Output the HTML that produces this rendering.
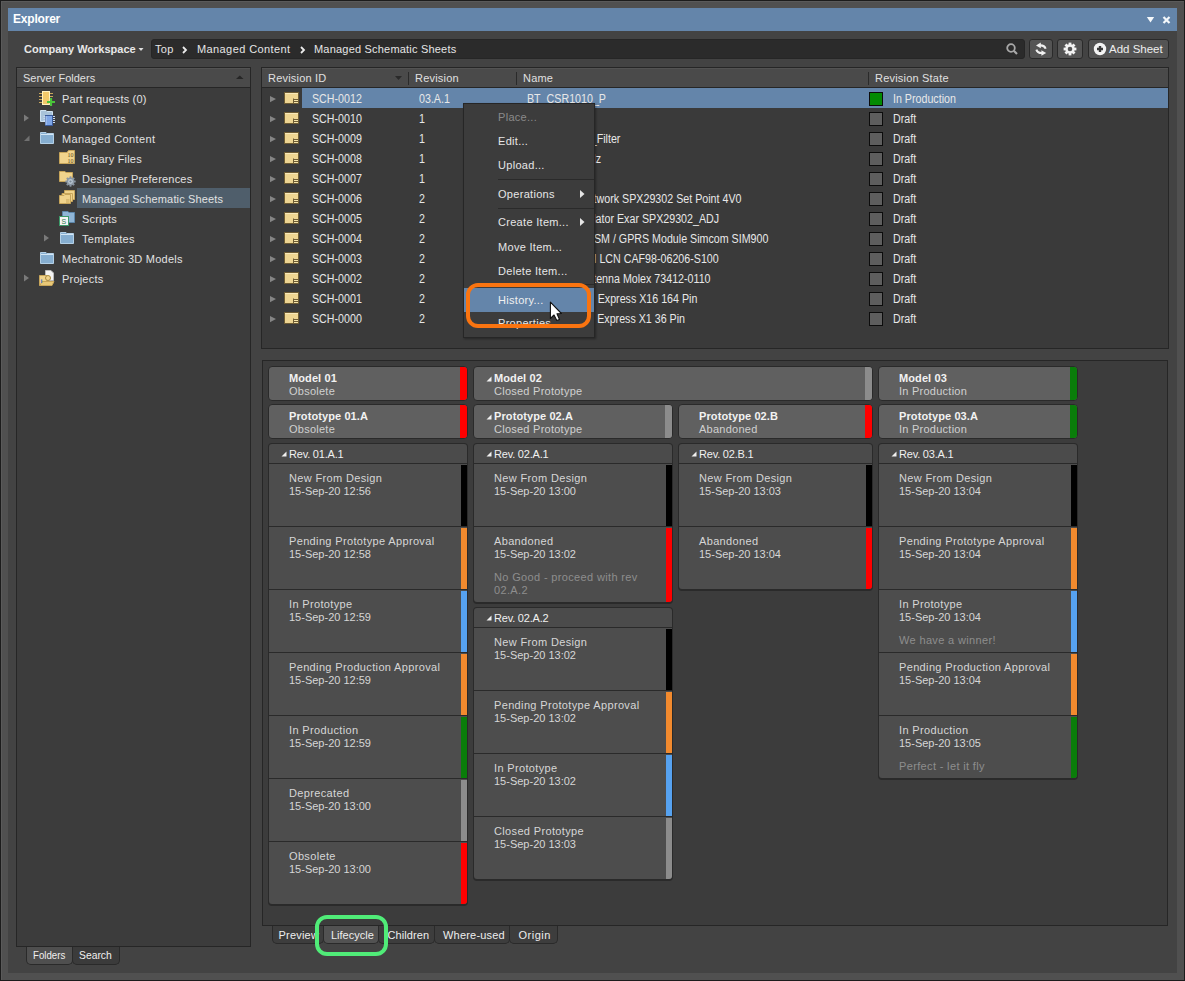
<!DOCTYPE html><html><head><meta charset="utf-8"><style>
*{box-sizing:border-box}
body{margin:0;width:1185px;height:981px;overflow:hidden;background:#1c1c1c;position:relative;font-family:"Liberation Sans", sans-serif;font-size:11px;color:#e6e6e6}
.a{position:absolute}
.t{position:absolute;white-space:nowrap;line-height:13px}
.n{position:absolute;white-space:nowrap;line-height:13px;font-size:12px;transform:scaleX(.89);transform-origin:0 0;color:#e8e8e8}
.nr{position:absolute;white-space:nowrap;line-height:13px;font-size:12px;transform:scaleX(.89);transform-origin:100% 0;color:#e8e8e8;text-align:right}
</style></head><body>
<div class="a" style="left:1px;top:1px;width:1183px;height:979px;background:#505050;border-top:1px solid #5a5a5a;border-left:1px solid #5a5a5a"></div><div class="a" style="left:8px;top:8px;width:1169px;height:965px;background:#434343"></div><div class="a" style="left:8px;top:8px;width:1169px;height:23px;background:#6485aa"></div><div class="t" style="left:13px;top:12px;font-weight:bold;font-size:12px;color:#fff;line-height:14px;letter-spacing:-.2px">Explorer</div><svg class="a" style="left:1140px;top:12px" width="40" height="14" viewBox="0 0 40 14"><path d="M6.8 5 L14.2 5 L10.5 10.5 Z" fill="#f4f8fb"/><path d="M23.5 5 L29.5 11 M29.5 5 L23.5 11" stroke="#f4f8fb" stroke-width="2.2"/></svg><div class="t" style="left:24px;top:43px;font-weight:bold;color:#e8e8e8">Company Workspace</div><svg class="a" style="left:137px;top:46px" width="10" height="7" viewBox="0 0 10 7"><path d="M1.5 2 L6.5 2 L4 5 Z" fill="#e0e0e0"/></svg><div class="a" style="left:151px;top:39px;width:874px;height:20px;background:#2b2b2b;border-radius:3px;border:1px solid #262626"></div><div class="t" style="left:155px;top:43px;color:#e6e6e6;letter-spacing:.3px">Top</div><svg class="a" style="left:181px;top:46px" width="8" height="8" viewBox="0 0 8 8"><path d="M2 1 L5 4 L2 7" stroke="#ececec" stroke-width="1.8" fill="none"/></svg><div class="t" style="left:197px;top:43px;color:#e6e6e6;letter-spacing:.4px">Managed Content</div><svg class="a" style="left:299px;top:46px" width="8" height="8" viewBox="0 0 8 8"><path d="M2 1 L5 4 L2 7" stroke="#ececec" stroke-width="1.8" fill="none"/></svg><div class="t" style="left:314px;top:43px;color:#e6e6e6;letter-spacing:.2px">Managed Schematic Sheets</div><svg class="a" style="left:1005px;top:42px" width="14" height="14" viewBox="0 0 14 14"><circle cx="6" cy="6" r="3.8" stroke="#a8a8a8" stroke-width="1.8" fill="none"/><path d="M8.8 8.8 L12 12" stroke="#a8a8a8" stroke-width="2.2"/></svg><div class="a" style="left:1029px;top:39px;width:24px;height:20px;background:#545454;border:1px solid #2a2a2a;border-radius:3px"></div><div class="a" style="left:1057px;top:39px;width:26px;height:20px;background:#545454;border:1px solid #2a2a2a;border-radius:3px"></div><div class="a" style="left:1088px;top:39px;width:81px;height:20px;background:#545454;border:1px solid #2a2a2a;border-radius:3px"></div><svg class="a" style="left:1034px;top:42px" width="16" height="15" viewBox="0 0 16 15"><path d="M11.6 6.8 Q10.5 3.2 6 3.4" stroke="#f0f0f0" stroke-width="2.1" fill="none"/><path d="M2 3.4 L6.8 0.6 L6.8 6.2 Z" fill="#f0f0f0"/><path d="M2.4 7.6 Q3.5 11.2 8 11" stroke="#f0f0f0" stroke-width="2.1" fill="none"/><path d="M12.2 11 L7.4 8.2 L7.4 13.8 Z" fill="#f0f0f0"/></svg><svg class="a" style="left:1062px;top:42px" width="16" height="15" viewBox="0 0 16 15"><g fill="#f2f2f2" transform="translate(8 7)"><rect x="-1.4" y="-6.4" width="2.8" height="3" transform="rotate(0)"/><rect x="-1.4" y="-6.4" width="2.8" height="3" transform="rotate(45)"/><rect x="-1.4" y="-6.4" width="2.8" height="3" transform="rotate(90)"/><rect x="-1.4" y="-6.4" width="2.8" height="3" transform="rotate(135)"/><rect x="-1.4" y="-6.4" width="2.8" height="3" transform="rotate(180)"/><rect x="-1.4" y="-6.4" width="2.8" height="3" transform="rotate(225)"/><rect x="-1.4" y="-6.4" width="2.8" height="3" transform="rotate(270)"/><rect x="-1.4" y="-6.4" width="2.8" height="3" transform="rotate(315)"/><circle r="4.7"/></g><circle cx="8" cy="7" r="2.3" fill="#545454"/></svg><svg class="a" style="left:1093px;top:42px" width="14" height="14" viewBox="0 0 14 14"><circle cx="7" cy="7" r="6.2" fill="#f4f4f4"/><path d="M7 4 V10 M4 7 H10" stroke="#3a3a3a" stroke-width="2.4"/></svg><div class="t" style="left:1109px;top:43px;color:#eee;font-size:11.5px">Add Sheet</div><div class="a" style="left:16px;top:67px;width:235px;height:880px;background:#3c3c3c;border:1px solid #262626"></div><div class="a" style="left:17px;top:68px;width:233px;height:20px;background:#4a4a4a;border-bottom:1px solid #262626;border-top:1px solid #535353"></div><div class="t" style="left:23px;top:72px;color:#e0e0e0">Server Folders</div><svg class="a" style="left:235px;top:73px" width="10" height="7" viewBox="0 0 10 7"><path d="M1 6 L8.5 6 L4.75 2.5 Z" fill="#262626"/></svg><svg class="a" style="left:39px;top:90px" width="17" height="17" viewBox="0 0 17 17"><path d="M0 3.5 H3 M0 6.5 H3 M0 9.5 H3 M0 12.5 H3 M11 3.5 H14 M11 6.5 H14" stroke="#c9a85c"/><rect x="3.5" y="1.5" width="7" height="13" fill="#f2c96a" stroke="#fff2c0"/><path d="M12 8 V16 M8 12 H16" stroke="#49c43a" stroke-width="2.2"/></svg><div class="t" style="left:62px;top:93px;color:#e2e2e2;letter-spacing:0.15px">Part requests (0)</div><svg class="a" style="left:23px;top:113px" width="8" height="10" viewBox="0 0 8 10"><path d="M1 1.5 L6 5 L1 8.5 Z" fill="#7a7a7a"/></svg><svg class="a" style="left:39px;top:110px" width="17" height="17" viewBox="0 0 17 17"><path d="M1.5 0.5 H7 L8 1.5 H13.5 V11.5 H1.5 Z" fill="#a9c3d9" stroke="#d0e2f0"/><path d="M4.5 6.5 H6 M4.5 8.5 H6 M4.5 10.5 H6 M14 6.5 H16 M14 8.5 H16 M14 10.5 H16 M14 12.5 H16" stroke="#c8d8ee"/><rect x="6.5" y="5.5" width="7" height="10" fill="#7fa6e6" stroke="#3a5a9a"/><path d="M7 6 V15" stroke="#b8d0f4"/></svg><div class="t" style="left:62px;top:113px;color:#e2e2e2;letter-spacing:0.15px">Components</div><svg class="a" style="left:23px;top:133px" width="8" height="10" viewBox="0 0 8 10"><path d="M6.5 2.5 L6.5 8 L1 8 Z" fill="#707070"/></svg><svg class="a" style="left:39px;top:132px" width="16" height="14" viewBox="0 0 16 14"><path d="M1.5 0.5 H7 L8 1.5 H14.5 V11.5 H1.5 Z" fill="#86aed0" stroke="#b4d0e6"/><path d="M2 2.5 H14" stroke="#d4e6f4"/></svg><div class="t" style="left:62px;top:133px;color:#e2e2e2;letter-spacing:0.4px">Managed Content</div><svg class="a" style="left:59px;top:150px" width="17" height="15" viewBox="0 0 17 15"><path d="M0.5 2.5 H8 L9.5 0.5 H15.5 V13.5 H0.5 Z" fill="#f0d38c" stroke="#c7a55a"/><text x="8.6" y="7" font-size="6" font-family="Liberation Serif" fill="#5a4820">10</text><text x="8.6" y="12.5" font-size="6" font-family="Liberation Serif" fill="#5a4820">10</text></svg><div class="t" style="left:82px;top:153px;color:#e2e2e2;letter-spacing:0.2px">Binary Files</div><svg class="a" style="left:59px;top:170px" width="18" height="17" viewBox="0 0 18 17"><path d="M0.5 1.5 H6 L7 2.5 H13.5 V11.5 H0.5 Z" fill="#f0d38c" stroke="#c7a55a"/><g transform="translate(11.5 11.5)" fill="#8a96a2"><rect x="-0.9" y="-5.2" width="1.8" height="2.4" transform="rotate(0)"/><rect x="-0.9" y="-5.2" width="1.8" height="2.4" transform="rotate(45)"/><rect x="-0.9" y="-5.2" width="1.8" height="2.4" transform="rotate(90)"/><rect x="-0.9" y="-5.2" width="1.8" height="2.4" transform="rotate(135)"/><rect x="-0.9" y="-5.2" width="1.8" height="2.4" transform="rotate(180)"/><rect x="-0.9" y="-5.2" width="1.8" height="2.4" transform="rotate(225)"/><rect x="-0.9" y="-5.2" width="1.8" height="2.4" transform="rotate(270)"/><rect x="-0.9" y="-5.2" width="1.8" height="2.4" transform="rotate(315)"/><circle r="3.9"/></g><circle cx="11.5" cy="11.5" r="2.4" fill="#b8c6d2"/><circle cx="11.5" cy="11.5" r="1.1" fill="#7a8894"/></svg><div class="t" style="left:82px;top:173px;color:#e2e2e2;letter-spacing:0.2px">Designer Preferences</div><div class="a" style="left:77px;top:188px;width:173px;height:20px;background:#4f5e6b"></div><svg class="a" style="left:59px;top:190px" width="17" height="15" viewBox="0 0 17 15"><path d="M5.5 0.5 H15.5 V9.5 H5.5 Z" fill="#f0d38c" stroke="#c7a55a"/><path d="M3 3.5 H13.5 V11.5 H3 Z" fill="#f0d38c" stroke="#c7a55a"/><path d="M0.5 5.5 H5 L6 4.5 H11.5 V13.5 H0.5 Z" fill="#f0d38c" stroke="#c7a55a"/><path d="M7 10 H10.5 M7 12 H10.5" stroke="#c7a55a"/></svg><div class="t" style="left:82px;top:193px;color:#e2e2e2;letter-spacing:0.15px">Managed Schematic Sheets</div><svg class="a" style="left:59px;top:210px" width="17" height="17" viewBox="0 0 17 17"><path d="M3.5 1.5 H9 L10 2.5 H15.5 V12.5 H3.5 Z" fill="#8fb5d6" stroke="#5d86aa"/><rect x="0.5" y="6.5" width="9" height="9" fill="#f4f4f4" stroke="#3d9a6a"/><text x="2.5" y="14" font-size="7" font-family="Liberation Sans" fill="#2d7a4a">S</text></svg><div class="t" style="left:82px;top:213px;color:#e2e2e2;letter-spacing:0.2px">Scripts</div><svg class="a" style="left:43px;top:233px" width="8" height="10" viewBox="0 0 8 10"><path d="M1 1.5 L6 5 L1 8.5 Z" fill="#7a7a7a"/></svg><svg class="a" style="left:59px;top:232px" width="16" height="14" viewBox="0 0 16 14"><path d="M1.5 0.5 H7 L8 1.5 H14.5 V11.5 H1.5 Z" fill="#86aed0" stroke="#b4d0e6"/><path d="M2 2.5 H14" stroke="#d4e6f4"/></svg><div class="t" style="left:82px;top:233px;color:#e2e2e2;letter-spacing:0.3px">Templates</div><svg class="a" style="left:39px;top:252px" width="16" height="14" viewBox="0 0 16 14"><path d="M1.5 0.5 H7 L8 1.5 H14.5 V11.5 H1.5 Z" fill="#86aed0" stroke="#b4d0e6"/><path d="M2 2.5 H14" stroke="#d4e6f4"/></svg><div class="t" style="left:62px;top:253px;color:#e2e2e2;letter-spacing:0.25px">Mechatronic 3D Models</div><svg class="a" style="left:23px;top:273px" width="8" height="10" viewBox="0 0 8 10"><path d="M1 1.5 L6 5 L1 8.5 Z" fill="#7a7a7a"/></svg><svg class="a" style="left:39px;top:270px" width="17" height="17" viewBox="0 0 17 17"><path d="M6.5 0.5 H12 L14.5 3 V10.5 H6.5 Z" fill="#f4f4f4" stroke="#bbb"/><path d="M0.5 5.5 H8 V15.5 H0.5 Z" fill="#f0d38c" stroke="#c7a55a"/><path d="M1 15.5 L3 11.5 H15 L13 15.5 Z" fill="#e8c878" stroke="#c7a55a"/><circle cx="9" cy="8" r="2.5" fill="#f0d38c" stroke="#a88a40"/><text x="1.5" y="13" font-size="7" font-weight="bold" font-family="Liberation Serif" fill="#4a78c8">i</text></svg><div class="t" style="left:62px;top:273px;color:#e2e2e2;letter-spacing:0.2px">Projects</div><div class="a" style="left:26px;top:947px;width:47px;height:18px;background:#4f4f4f;border:1px solid #2a2a2a;border-top:none;border-radius:0 0 5px 5px"></div><div class="t" style="left:32.5px;top:949px;font-size:11.5px;transform:scaleX(.84);transform-origin:0 0;color:#f0f0f0">Folders</div><div class="a" style="left:72px;top:947px;width:48px;height:18px;background:#3b3b3b;border:1px solid #2a2a2a;border-top:none;border-radius:0 0 5px 5px"></div><div class="t" style="left:79px;top:949px;font-size:11.5px;transform:scaleX(.9);transform-origin:0 0;color:#f0f0f0">Search</div><div class="a" style="left:261px;top:67px;width:908px;height:282px;background:#3a3a3a;border:1px solid #262626"></div><div class="a" style="left:262px;top:68px;width:906px;height:20px;background:#4a4a4a;border-bottom:1px solid #262626;border-top:1px solid #535353"></div><div class="t" style="left:268px;top:72px;color:#e0e0e0;letter-spacing:.2px">Revision ID</div><svg class="a" style="left:393px;top:74px" width="10" height="7" viewBox="0 0 10 7"><path d="M2 2 L9 2 L5.5 6 Z" fill="#2a2a2a"/></svg><div class="a" style="left:408px;top:72px;width:1px;height:13px;background:#2a2a2a"></div><div class="a" style="left:516px;top:72px;width:1px;height:13px;background:#2a2a2a"></div><div class="a" style="left:868px;top:72px;width:1px;height:13px;background:#2a2a2a"></div><div class="t" style="left:415px;top:72px;color:#e0e0e0;letter-spacing:.2px">Revision</div><div class="t" style="left:523px;top:72px;color:#e0e0e0;letter-spacing:.2px">Name</div><div class="t" style="left:875px;top:72px;color:#e0e0e0;letter-spacing:.2px">Revision State</div><div class="a" style="left:302px;top:88px;width:866px;height:20px;background:#6485aa"></div><svg class="a" style="left:270px;top:96px" width="8" height="8" viewBox="0 0 8 8"><path d="M0 0 L6 3.1 L0 6.2 Z" fill="#858585"/></svg><svg class="a" style="left:284px;top:92px" width="16" height="13" viewBox="0 0 16 13"><rect x="0.5" y="0.5" width="14" height="11" fill="#eed592" stroke="#6e5c34"/><path d="M1 1.5 H14" stroke="#f8e8b8"/><path d="M9.5 6.5 V11.5 M10 7.5 H14 M10 9.5 H14" stroke="#6e5c34"/><path d="M10 8.5 H14 M10 10.5 H14" stroke="#f6e4a8"/></svg><div class="n" style="left:311.5px;top:93px;">SCH-0012</div><div class="n" style="left:419px;top:93px;">03.A.1</div><div class="n" style="left:527px;top:93px;">BT_CSR1010_P</div><div class="a" style="left:869px;top:92px;width:14px;height:14px;background:#038a03;border:1px solid #0c0c0c"></div><div class="n" style="left:893px;top:93px;">In Production</div><svg class="a" style="left:270px;top:116px" width="8" height="8" viewBox="0 0 8 8"><path d="M0 0 L6 3.1 L0 6.2 Z" fill="#858585"/></svg><svg class="a" style="left:284px;top:112px" width="16" height="13" viewBox="0 0 16 13"><rect x="0.5" y="0.5" width="14" height="11" fill="#eed592" stroke="#6e5c34"/><path d="M1 1.5 H14" stroke="#f8e8b8"/><path d="M9.5 6.5 V11.5 M10 7.5 H14 M10 9.5 H14" stroke="#6e5c34"/><path d="M10 8.5 H14 M10 10.5 H14" stroke="#f6e4a8"/></svg><div class="n" style="left:311.5px;top:113px;">SCH-0010</div><div class="n" style="left:419px;top:113px;">1</div><div class="a" style="left:869px;top:112px;width:14px;height:14px;background:#5e5e5e;border:1px solid #0c0c0c"></div><div class="n" style="left:893px;top:113px;">Draft</div><svg class="a" style="left:270px;top:136px" width="8" height="8" viewBox="0 0 8 8"><path d="M0 0 L6 3.1 L0 6.2 Z" fill="#858585"/></svg><svg class="a" style="left:284px;top:132px" width="16" height="13" viewBox="0 0 16 13"><rect x="0.5" y="0.5" width="14" height="11" fill="#eed592" stroke="#6e5c34"/><path d="M1 1.5 H14" stroke="#f8e8b8"/><path d="M9.5 6.5 V11.5 M10 7.5 H14 M10 9.5 H14" stroke="#6e5c34"/><path d="M10 8.5 H14 M10 10.5 H14" stroke="#f6e4a8"/></svg><div class="n" style="left:311.5px;top:133px;">SCH-0009</div><div class="n" style="left:419px;top:133px;">1</div><div class="nr" style="right:565px;top:133px">BT_CSR1010_Filter</div><div class="a" style="left:869px;top:132px;width:14px;height:14px;background:#5e5e5e;border:1px solid #0c0c0c"></div><div class="n" style="left:893px;top:133px;">Draft</div><svg class="a" style="left:270px;top:156px" width="8" height="8" viewBox="0 0 8 8"><path d="M0 0 L6 3.1 L0 6.2 Z" fill="#858585"/></svg><svg class="a" style="left:284px;top:152px" width="16" height="13" viewBox="0 0 16 13"><rect x="0.5" y="0.5" width="14" height="11" fill="#eed592" stroke="#6e5c34"/><path d="M1 1.5 H14" stroke="#f8e8b8"/><path d="M9.5 6.5 V11.5 M10 7.5 H14 M10 9.5 H14" stroke="#6e5c34"/><path d="M10 8.5 H14 M10 10.5 H14" stroke="#f6e4a8"/></svg><div class="n" style="left:311.5px;top:153px;">SCH-0008</div><div class="n" style="left:419px;top:153px;">1</div><div class="nr" style="right:583.5px;top:153px">Crystal 32.768kHz</div><div class="a" style="left:869px;top:152px;width:14px;height:14px;background:#5e5e5e;border:1px solid #0c0c0c"></div><div class="n" style="left:893px;top:153px;">Draft</div><svg class="a" style="left:270px;top:176px" width="8" height="8" viewBox="0 0 8 8"><path d="M0 0 L6 3.1 L0 6.2 Z" fill="#858585"/></svg><svg class="a" style="left:284px;top:172px" width="16" height="13" viewBox="0 0 16 13"><rect x="0.5" y="0.5" width="14" height="11" fill="#eed592" stroke="#6e5c34"/><path d="M1 1.5 H14" stroke="#f8e8b8"/><path d="M9.5 6.5 V11.5 M10 7.5 H14 M10 9.5 H14" stroke="#6e5c34"/><path d="M10 8.5 H14 M10 10.5 H14" stroke="#f6e4a8"/></svg><div class="n" style="left:311.5px;top:173px;">SCH-0007</div><div class="n" style="left:419px;top:173px;">1</div><div class="a" style="left:869px;top:172px;width:14px;height:14px;background:#5e5e5e;border:1px solid #0c0c0c"></div><div class="n" style="left:893px;top:173px;">Draft</div><svg class="a" style="left:270px;top:196px" width="8" height="8" viewBox="0 0 8 8"><path d="M0 0 L6 3.1 L0 6.2 Z" fill="#858585"/></svg><svg class="a" style="left:284px;top:192px" width="16" height="13" viewBox="0 0 16 13"><rect x="0.5" y="0.5" width="14" height="11" fill="#eed592" stroke="#6e5c34"/><path d="M1 1.5 H14" stroke="#f8e8b8"/><path d="M9.5 6.5 V11.5 M10 7.5 H14 M10 9.5 H14" stroke="#6e5c34"/><path d="M10 8.5 H14 M10 10.5 H14" stroke="#f6e4a8"/></svg><div class="n" style="left:311.5px;top:193px;">SCH-0006</div><div class="n" style="left:419px;top:193px;">2</div><div class="nr" style="right:444px;top:193px">Network SPX29302 Set Point 4V0</div><div class="a" style="left:869px;top:192px;width:14px;height:14px;background:#5e5e5e;border:1px solid #0c0c0c"></div><div class="n" style="left:893px;top:193px;">Draft</div><svg class="a" style="left:270px;top:216px" width="8" height="8" viewBox="0 0 8 8"><path d="M0 0 L6 3.1 L0 6.2 Z" fill="#858585"/></svg><svg class="a" style="left:284px;top:212px" width="16" height="13" viewBox="0 0 16 13"><rect x="0.5" y="0.5" width="14" height="11" fill="#eed592" stroke="#6e5c34"/><path d="M1 1.5 H14" stroke="#f8e8b8"/><path d="M9.5 6.5 V11.5 M10 7.5 H14 M10 9.5 H14" stroke="#6e5c34"/><path d="M10 8.5 H14 M10 10.5 H14" stroke="#f6e4a8"/></svg><div class="n" style="left:311.5px;top:213px;">SCH-0005</div><div class="n" style="left:419px;top:213px;">2</div><div class="nr" style="right:466px;top:213px">Regulator Exar SPX29302_ADJ</div><div class="a" style="left:869px;top:212px;width:14px;height:14px;background:#5e5e5e;border:1px solid #0c0c0c"></div><div class="n" style="left:893px;top:213px;">Draft</div><svg class="a" style="left:270px;top:236px" width="8" height="8" viewBox="0 0 8 8"><path d="M0 0 L6 3.1 L0 6.2 Z" fill="#858585"/></svg><svg class="a" style="left:284px;top:232px" width="16" height="13" viewBox="0 0 16 13"><rect x="0.5" y="0.5" width="14" height="11" fill="#eed592" stroke="#6e5c34"/><path d="M1 1.5 H14" stroke="#f8e8b8"/><path d="M9.5 6.5 V11.5 M10 7.5 H14 M10 9.5 H14" stroke="#6e5c34"/><path d="M10 8.5 H14 M10 10.5 H14" stroke="#f6e4a8"/></svg><div class="n" style="left:311.5px;top:233px;">SCH-0004</div><div class="n" style="left:419px;top:233px;">2</div><div class="nr" style="right:417px;top:233px">GSM / GPRS Module Simcom SIM900</div><div class="a" style="left:869px;top:232px;width:14px;height:14px;background:#5e5e5e;border:1px solid #0c0c0c"></div><div class="n" style="left:893px;top:233px;">Draft</div><svg class="a" style="left:270px;top:256px" width="8" height="8" viewBox="0 0 8 8"><path d="M0 0 L6 3.1 L0 6.2 Z" fill="#858585"/></svg><svg class="a" style="left:284px;top:252px" width="16" height="13" viewBox="0 0 16 13"><rect x="0.5" y="0.5" width="14" height="11" fill="#eed592" stroke="#6e5c34"/><path d="M1 1.5 H14" stroke="#f8e8b8"/><path d="M9.5 6.5 V11.5 M10 7.5 H14 M10 9.5 H14" stroke="#6e5c34"/><path d="M10 8.5 H14 M10 10.5 H14" stroke="#f6e4a8"/></svg><div class="n" style="left:311.5px;top:253px;">SCH-0003</div><div class="n" style="left:419px;top:253px;">2</div><div class="nr" style="right:466px;top:253px">SIM LCN CAF98-06206-S100</div><div class="a" style="left:869px;top:252px;width:14px;height:14px;background:#5e5e5e;border:1px solid #0c0c0c"></div><div class="n" style="left:893px;top:253px;">Draft</div><svg class="a" style="left:270px;top:276px" width="8" height="8" viewBox="0 0 8 8"><path d="M0 0 L6 3.1 L0 6.2 Z" fill="#858585"/></svg><svg class="a" style="left:284px;top:272px" width="16" height="13" viewBox="0 0 16 13"><rect x="0.5" y="0.5" width="14" height="11" fill="#eed592" stroke="#6e5c34"/><path d="M1 1.5 H14" stroke="#f8e8b8"/><path d="M9.5 6.5 V11.5 M10 7.5 H14 M10 9.5 H14" stroke="#6e5c34"/><path d="M10 8.5 H14 M10 10.5 H14" stroke="#f6e4a8"/></svg><div class="n" style="left:311.5px;top:273px;">SCH-0002</div><div class="n" style="left:419px;top:273px;">2</div><div class="nr" style="right:474px;top:273px">Antenna Molex 73412-0110</div><div class="a" style="left:869px;top:272px;width:14px;height:14px;background:#5e5e5e;border:1px solid #0c0c0c"></div><div class="n" style="left:893px;top:273px;">Draft</div><svg class="a" style="left:270px;top:296px" width="8" height="8" viewBox="0 0 8 8"><path d="M0 0 L6 3.1 L0 6.2 Z" fill="#858585"/></svg><svg class="a" style="left:284px;top:292px" width="16" height="13" viewBox="0 0 16 13"><rect x="0.5" y="0.5" width="14" height="11" fill="#eed592" stroke="#6e5c34"/><path d="M1 1.5 H14" stroke="#f8e8b8"/><path d="M9.5 6.5 V11.5 M10 7.5 H14 M10 9.5 H14" stroke="#6e5c34"/><path d="M10 8.5 H14 M10 10.5 H14" stroke="#f6e4a8"/></svg><div class="n" style="left:311.5px;top:293px;">SCH-0001</div><div class="n" style="left:419px;top:293px;">2</div><div class="nr" style="right:487.5px;top:293px">PCI Express X16 164 Pin</div><div class="a" style="left:869px;top:292px;width:14px;height:14px;background:#5e5e5e;border:1px solid #0c0c0c"></div><div class="n" style="left:893px;top:293px;">Draft</div><svg class="a" style="left:270px;top:316px" width="8" height="8" viewBox="0 0 8 8"><path d="M0 0 L6 3.1 L0 6.2 Z" fill="#858585"/></svg><svg class="a" style="left:284px;top:312px" width="16" height="13" viewBox="0 0 16 13"><rect x="0.5" y="0.5" width="14" height="11" fill="#eed592" stroke="#6e5c34"/><path d="M1 1.5 H14" stroke="#f8e8b8"/><path d="M9.5 6.5 V11.5 M10 7.5 H14 M10 9.5 H14" stroke="#6e5c34"/><path d="M10 8.5 H14 M10 10.5 H14" stroke="#f6e4a8"/></svg><div class="n" style="left:311.5px;top:313px;">SCH-0000</div><div class="n" style="left:419px;top:313px;">2</div><div class="nr" style="right:500px;top:313px">PCI Express X1 36 Pin</div><div class="a" style="left:869px;top:312px;width:14px;height:14px;background:#5e5e5e;border:1px solid #0c0c0c"></div><div class="n" style="left:893px;top:313px;">Draft</div><div class="a" style="left:463px;top:103px;width:132px;height:235px;background:#3c3c3c;border:1px solid #262626;box-shadow:1px 1px 2px rgba(0,0,0,.35)"></div><div class="t" style="left:498px;top:111px;color:#8a8a8a;letter-spacing:.3px">Place...</div><div class="t" style="left:498px;top:135px;color:#e6e6e6;letter-spacing:.3px">Edit...</div><div class="t" style="left:498px;top:159px;color:#e6e6e6;letter-spacing:.3px">Upload...</div><div class="t" style="left:498px;top:188px;color:#e6e6e6;letter-spacing:.3px">Operations</div><div class="t" style="left:498px;top:216px;color:#e6e6e6;letter-spacing:.3px">Create Item...</div><div class="t" style="left:498px;top:241px;color:#e6e6e6;letter-spacing:.3px">Move Item...</div><div class="t" style="left:498px;top:265px;color:#e6e6e6;letter-spacing:.3px">Delete Item...</div><div class="a" style="left:498px;top:179px;width:96px;height:1px;background:#2a2a2a"></div><div class="a" style="left:498px;top:208px;width:96px;height:1px;background:#2a2a2a"></div><div class="a" style="left:498px;top:284px;width:96px;height:1px;background:#2a2a2a"></div><svg class="a" style="left:579px;top:189px" width="7" height="10" viewBox="0 0 7 10"><path d="M1 1 L5.5 5 L1 9 Z" fill="#e6e6e6"/></svg><svg class="a" style="left:579px;top:217px" width="7" height="10" viewBox="0 0 7 10"><path d="M1 1 L5.5 5 L1 9 Z" fill="#e6e6e6"/></svg><div class="a" style="left:464px;top:288px;width:130px;height:24px;background:#6485aa"></div><div class="t" style="left:498px;top:294px;color:#f0f0f0;letter-spacing:.3px">History...</div><div class="t" style="left:498px;top:317px;color:#e6e6e6;letter-spacing:.3px">Properties</div><div class="a" style="left:466px;top:283px;width:125px;height:45px;border:4px solid #fa7410;border-radius:12px"></div><svg class="a" style="left:549px;top:301px" width="16" height="22" viewBox="0 0 16 22"><path d="M1.4 1.2 L1.4 17.5 L5 14 L7.8 19.5 L10.5 18.5 L8 12.8 L12.4 12.5 Z" fill="#fff" stroke="#111" stroke-width="1.1" stroke-linejoin="round"/></svg><div class="a" style="left:262px;top:360px;width:906px;height:566px;background:#3c3c3c;border:1px solid #262626"></div><div class="a" style="left:268px;top:366px;width:200px;height:35px;background:#606060;border:1px solid #2a2a2a;border-radius:4px;overflow:hidden"><div class="a" style="right:0;top:0;width:7px;height:33px;background:#ff0000"></div></div><div class="t" style="left:289px;top:372px;font-weight:bold;color:#f2f2f2;letter-spacing:.1px">Model 01</div><div class="t" style="left:289px;top:385px;color:#d0d0d0;letter-spacing:.25px">Obsolete</div><div class="a" style="left:473px;top:366px;width:400px;height:35px;background:#606060;border:1px solid #2a2a2a;border-radius:4px;overflow:hidden"><div class="a" style="right:0;top:0;width:7px;height:33px;background:#8c8c8c"></div></div><svg class="a" style="left:486px;top:376px" width="6" height="6" viewBox="0 0 6 6"><path d="M5.5 0.5 L5.5 5.5 L0.5 5.5 Z" fill="#f0f0f0"/></svg><div class="t" style="left:494px;top:372px;font-weight:bold;color:#f2f2f2;letter-spacing:.1px">Model 02</div><div class="t" style="left:494px;top:385px;color:#d0d0d0;letter-spacing:.25px">Closed Prototype</div><div class="a" style="left:878px;top:366px;width:200px;height:35px;background:#606060;border:1px solid #2a2a2a;border-radius:4px;overflow:hidden"><div class="a" style="right:0;top:0;width:7px;height:33px;background:#0a7d0a"></div></div><div class="t" style="left:899px;top:372px;font-weight:bold;color:#f2f2f2;letter-spacing:.1px">Model 03</div><div class="t" style="left:899px;top:385px;color:#d0d0d0;letter-spacing:.25px">In Production</div><div class="a" style="left:268px;top:404px;width:200px;height:35px;background:#606060;border:1px solid #2a2a2a;border-radius:4px;overflow:hidden"><div class="a" style="right:0;top:0;width:7px;height:33px;background:#ff0000"></div></div><div class="t" style="left:289px;top:410px;font-weight:bold;color:#f2f2f2;letter-spacing:.1px">Prototype 01.A</div><div class="t" style="left:289px;top:423px;color:#d0d0d0;letter-spacing:.25px">Obsolete</div><div class="a" style="left:473px;top:404px;width:200px;height:35px;background:#606060;border:1px solid #2a2a2a;border-radius:4px;overflow:hidden"><div class="a" style="right:0;top:0;width:7px;height:33px;background:#8c8c8c"></div></div><svg class="a" style="left:486px;top:414px" width="6" height="6" viewBox="0 0 6 6"><path d="M5.5 0.5 L5.5 5.5 L0.5 5.5 Z" fill="#f0f0f0"/></svg><div class="t" style="left:494px;top:410px;font-weight:bold;color:#f2f2f2;letter-spacing:.1px">Prototype 02.A</div><div class="t" style="left:494px;top:423px;color:#d0d0d0;letter-spacing:.25px">Closed Prototype</div><div class="a" style="left:678px;top:404px;width:195px;height:35px;background:#606060;border:1px solid #2a2a2a;border-radius:4px;overflow:hidden"><div class="a" style="right:0;top:0;width:7px;height:33px;background:#ff0000"></div></div><div class="t" style="left:699px;top:410px;font-weight:bold;color:#f2f2f2;letter-spacing:.1px">Prototype 02.B</div><div class="t" style="left:699px;top:423px;color:#d0d0d0;letter-spacing:.25px">Abandoned</div><div class="a" style="left:878px;top:404px;width:200px;height:35px;background:#606060;border:1px solid #2a2a2a;border-radius:4px;overflow:hidden"><div class="a" style="right:0;top:0;width:7px;height:33px;background:#0a7d0a"></div></div><div class="t" style="left:899px;top:410px;font-weight:bold;color:#f2f2f2;letter-spacing:.1px">Prototype 03.A</div><div class="t" style="left:899px;top:423px;color:#d0d0d0;letter-spacing:.25px">In Production</div><div class="a" style="left:268px;top:443px;width:200px;height:463px;background:#2a2a2a;border-radius:4px"></div><div class="a" style="left:269px;top:444px;width:198px;height:19px;background:#4b4b4b;border-radius:3px 3px 0 0"></div><svg class="a" style="left:281px;top:451px" width="6" height="6" viewBox="0 0 6 6"><path d="M5.5 0.5 L5.5 5.5 L0.5 5.5 Z" fill="#f0f0f0"/></svg><div class="t" style="left:289px;top:448px;color:#f0f0f0;letter-spacing:-.2px">Rev. 01.A.1</div><div class="a" style="left:269px;top:464px;width:198px;height:62px;background:#4d4d4d;overflow:hidden;"><div class="a" style="right:0;top:1px;width:6px;height:61px;background:#000"></div></div><div class="t" style="left:289px;top:472px;color:#d6d6d6;letter-spacing:.35px">New From Design</div><div class="t" style="left:289px;top:485px;color:#d6d6d6;letter-spacing:0px">15-Sep-20 12:56</div><div class="a" style="left:269px;top:527px;width:198px;height:62px;background:#4d4d4d;overflow:hidden;"><div class="a" style="right:0;top:1px;width:6px;height:61px;background:#f28a2e"></div></div><div class="t" style="left:289px;top:535px;color:#d6d6d6;letter-spacing:.35px">Pending Prototype Approval</div><div class="t" style="left:289px;top:548px;color:#d6d6d6;letter-spacing:0px">15-Sep-20 12:58</div><div class="a" style="left:269px;top:590px;width:198px;height:62px;background:#4d4d4d;overflow:hidden;"><div class="a" style="right:0;top:1px;width:6px;height:61px;background:#56a2f0"></div></div><div class="t" style="left:289px;top:598px;color:#d6d6d6;letter-spacing:.35px">In Prototype</div><div class="t" style="left:289px;top:611px;color:#d6d6d6;letter-spacing:0px">15-Sep-20 12:59</div><div class="a" style="left:269px;top:653px;width:198px;height:62px;background:#4d4d4d;overflow:hidden;"><div class="a" style="right:0;top:1px;width:6px;height:61px;background:#f28a2e"></div></div><div class="t" style="left:289px;top:661px;color:#d6d6d6;letter-spacing:.35px">Pending Production Approval</div><div class="t" style="left:289px;top:674px;color:#d6d6d6;letter-spacing:0px">15-Sep-20 12:59</div><div class="a" style="left:269px;top:716px;width:198px;height:62px;background:#4d4d4d;overflow:hidden;"><div class="a" style="right:0;top:1px;width:6px;height:61px;background:#0a7d0a"></div></div><div class="t" style="left:289px;top:724px;color:#d6d6d6;letter-spacing:.35px">In Production</div><div class="t" style="left:289px;top:737px;color:#d6d6d6;letter-spacing:0px">15-Sep-20 12:59</div><div class="a" style="left:269px;top:779px;width:198px;height:62px;background:#4d4d4d;overflow:hidden;"><div class="a" style="right:0;top:1px;width:6px;height:61px;background:#8c8c8c"></div></div><div class="t" style="left:289px;top:787px;color:#d6d6d6;letter-spacing:.35px">Deprecated</div><div class="t" style="left:289px;top:800px;color:#d6d6d6;letter-spacing:0px">15-Sep-20 13:00</div><div class="a" style="left:269px;top:842px;width:198px;height:62px;background:#4d4d4d;overflow:hidden;border-radius:0 0 3px 3px;"><div class="a" style="right:0;top:1px;width:6px;height:61px;background:#ff0000"></div></div><div class="t" style="left:289px;top:850px;color:#d6d6d6;letter-spacing:.35px">Obsolete</div><div class="t" style="left:289px;top:863px;color:#d6d6d6;letter-spacing:0px">15-Sep-20 13:00</div><div class="a" style="left:473px;top:443px;width:200px;height:161px;background:#2a2a2a;border-radius:4px"></div><div class="a" style="left:474px;top:444px;width:198px;height:19px;background:#4b4b4b;border-radius:3px 3px 0 0"></div><svg class="a" style="left:486px;top:451px" width="6" height="6" viewBox="0 0 6 6"><path d="M5.5 0.5 L5.5 5.5 L0.5 5.5 Z" fill="#f0f0f0"/></svg><div class="t" style="left:494px;top:448px;color:#f0f0f0;letter-spacing:-.2px">Rev. 02.A.1</div><div class="a" style="left:474px;top:464px;width:198px;height:62px;background:#4d4d4d;overflow:hidden;"><div class="a" style="right:0;top:1px;width:6px;height:61px;background:#000"></div></div><div class="t" style="left:494px;top:472px;color:#d6d6d6;letter-spacing:.35px">New From Design</div><div class="t" style="left:494px;top:485px;color:#d6d6d6;letter-spacing:0px">15-Sep-20 13:00</div><div class="a" style="left:474px;top:527px;width:198px;height:75px;background:#4d4d4d;overflow:hidden;border-radius:0 0 3px 3px;"><div class="a" style="right:0;top:1px;width:6px;height:74px;background:#ff0000"></div></div><div class="t" style="left:494px;top:535px;color:#d6d6d6;letter-spacing:.35px">Abandoned</div><div class="t" style="left:494px;top:548px;color:#d6d6d6;letter-spacing:0px">15-Sep-20 13:02</div><div class="a" style="left:494px;top:571px;width:164px;line-height:13px;color:#8e8e8e;letter-spacing:.35px">No Good - proceed with rev 02.A.2</div><div class="a" style="left:473px;top:607px;width:200px;height:274px;background:#2a2a2a;border-radius:4px"></div><div class="a" style="left:474px;top:608px;width:198px;height:19px;background:#4b4b4b;border-radius:3px 3px 0 0"></div><svg class="a" style="left:486px;top:615px" width="6" height="6" viewBox="0 0 6 6"><path d="M5.5 0.5 L5.5 5.5 L0.5 5.5 Z" fill="#f0f0f0"/></svg><div class="t" style="left:494px;top:612px;color:#f0f0f0;letter-spacing:-.2px">Rev. 02.A.2</div><div class="a" style="left:474px;top:628px;width:198px;height:62px;background:#4d4d4d;overflow:hidden;"><div class="a" style="right:0;top:1px;width:6px;height:61px;background:#000"></div></div><div class="t" style="left:494px;top:636px;color:#d6d6d6;letter-spacing:.35px">New From Design</div><div class="t" style="left:494px;top:649px;color:#d6d6d6;letter-spacing:0px">15-Sep-20 13:02</div><div class="a" style="left:474px;top:691px;width:198px;height:62px;background:#4d4d4d;overflow:hidden;"><div class="a" style="right:0;top:1px;width:6px;height:61px;background:#f28a2e"></div></div><div class="t" style="left:494px;top:699px;color:#d6d6d6;letter-spacing:.35px">Pending Prototype Approval</div><div class="t" style="left:494px;top:712px;color:#d6d6d6;letter-spacing:0px">15-Sep-20 13:02</div><div class="a" style="left:474px;top:754px;width:198px;height:62px;background:#4d4d4d;overflow:hidden;"><div class="a" style="right:0;top:1px;width:6px;height:61px;background:#56a2f0"></div></div><div class="t" style="left:494px;top:762px;color:#d6d6d6;letter-spacing:.35px">In Prototype</div><div class="t" style="left:494px;top:775px;color:#d6d6d6;letter-spacing:0px">15-Sep-20 13:02</div><div class="a" style="left:474px;top:817px;width:198px;height:62px;background:#4d4d4d;overflow:hidden;border-radius:0 0 3px 3px;"><div class="a" style="right:0;top:1px;width:6px;height:61px;background:#8c8c8c"></div></div><div class="t" style="left:494px;top:825px;color:#d6d6d6;letter-spacing:.35px">Closed Prototype</div><div class="t" style="left:494px;top:838px;color:#d6d6d6;letter-spacing:0px">15-Sep-20 13:03</div><div class="a" style="left:678px;top:443px;width:195px;height:148px;background:#2a2a2a;border-radius:4px"></div><div class="a" style="left:679px;top:444px;width:193px;height:19px;background:#4b4b4b;border-radius:3px 3px 0 0"></div><svg class="a" style="left:691px;top:451px" width="6" height="6" viewBox="0 0 6 6"><path d="M5.5 0.5 L5.5 5.5 L0.5 5.5 Z" fill="#f0f0f0"/></svg><div class="t" style="left:699px;top:448px;color:#f0f0f0;letter-spacing:-.2px">Rev. 02.B.1</div><div class="a" style="left:679px;top:464px;width:193px;height:62px;background:#4d4d4d;overflow:hidden;"><div class="a" style="right:0;top:1px;width:6px;height:61px;background:#000"></div></div><div class="t" style="left:699px;top:472px;color:#d6d6d6;letter-spacing:.35px">New From Design</div><div class="t" style="left:699px;top:485px;color:#d6d6d6;letter-spacing:0px">15-Sep-20 13:03</div><div class="a" style="left:679px;top:527px;width:193px;height:62px;background:#4d4d4d;overflow:hidden;border-radius:0 0 3px 3px;"><div class="a" style="right:0;top:1px;width:6px;height:61px;background:#ff0000"></div></div><div class="t" style="left:699px;top:535px;color:#d6d6d6;letter-spacing:.35px">Abandoned</div><div class="t" style="left:699px;top:548px;color:#d6d6d6;letter-spacing:0px">15-Sep-20 13:04</div><div class="a" style="left:878px;top:443px;width:200px;height:337px;background:#2a2a2a;border-radius:4px"></div><div class="a" style="left:879px;top:444px;width:198px;height:19px;background:#4b4b4b;border-radius:3px 3px 0 0"></div><svg class="a" style="left:891px;top:451px" width="6" height="6" viewBox="0 0 6 6"><path d="M5.5 0.5 L5.5 5.5 L0.5 5.5 Z" fill="#f0f0f0"/></svg><div class="t" style="left:899px;top:448px;color:#f0f0f0;letter-spacing:-.2px">Rev. 03.A.1</div><div class="a" style="left:879px;top:464px;width:198px;height:62px;background:#4d4d4d;overflow:hidden;"><div class="a" style="right:0;top:1px;width:6px;height:61px;background:#000"></div></div><div class="t" style="left:899px;top:472px;color:#d6d6d6;letter-spacing:.35px">New From Design</div><div class="t" style="left:899px;top:485px;color:#d6d6d6;letter-spacing:0px">15-Sep-20 13:04</div><div class="a" style="left:879px;top:527px;width:198px;height:62px;background:#4d4d4d;overflow:hidden;"><div class="a" style="right:0;top:1px;width:6px;height:61px;background:#f28a2e"></div></div><div class="t" style="left:899px;top:535px;color:#d6d6d6;letter-spacing:.35px">Pending Prototype Approval</div><div class="t" style="left:899px;top:548px;color:#d6d6d6;letter-spacing:0px">15-Sep-20 13:04</div><div class="a" style="left:879px;top:590px;width:198px;height:62px;background:#4d4d4d;overflow:hidden;"><div class="a" style="right:0;top:1px;width:6px;height:61px;background:#56a2f0"></div></div><div class="t" style="left:899px;top:598px;color:#d6d6d6;letter-spacing:.35px">In Prototype</div><div class="t" style="left:899px;top:611px;color:#d6d6d6;letter-spacing:0px">15-Sep-20 13:04</div><div class="a" style="left:899px;top:634px;width:164px;line-height:13px;color:#8e8e8e;letter-spacing:.35px">We have a winner!</div><div class="a" style="left:879px;top:653px;width:198px;height:62px;background:#4d4d4d;overflow:hidden;"><div class="a" style="right:0;top:1px;width:6px;height:61px;background:#f28a2e"></div></div><div class="t" style="left:899px;top:661px;color:#d6d6d6;letter-spacing:.35px">Pending Production Approval</div><div class="t" style="left:899px;top:674px;color:#d6d6d6;letter-spacing:0px">15-Sep-20 13:04</div><div class="a" style="left:879px;top:716px;width:198px;height:62px;background:#4d4d4d;overflow:hidden;border-radius:0 0 3px 3px;"><div class="a" style="right:0;top:1px;width:6px;height:61px;background:#0a7d0a"></div></div><div class="t" style="left:899px;top:724px;color:#d6d6d6;letter-spacing:.35px">In Production</div><div class="t" style="left:899px;top:737px;color:#d6d6d6;letter-spacing:0px">15-Sep-20 13:05</div><div class="a" style="left:899px;top:760px;width:164px;line-height:13px;color:#8e8e8e;letter-spacing:.35px">Perfect - let it fly</div><div class="a" style="left:272px;top:926px;width:52px;height:18px;background:#3d3d3d;border:1px solid #2a2a2a;border-top:none;border-radius:0 0 5px 5px"></div><div class="t" style="left:278.5px;top:929px;color:#eee;letter-spacing:0.2px">Preview</div><div class="a" style="left:323px;top:926px;width:56px;height:18px;background:#525252;border:1px solid #2a2a2a;border-top:none;border-radius:0 0 5px 5px"></div><div class="t" style="left:331px;top:929px;color:#eee;letter-spacing:0px">Lifecycle</div><div class="a" style="left:378px;top:926px;width:57px;height:18px;background:#3d3d3d;border:1px solid #2a2a2a;border-top:none;border-radius:0 0 5px 5px"></div><div class="t" style="left:387.5px;top:929px;color:#eee;letter-spacing:0.1px">Children</div><div class="a" style="left:434px;top:926px;width:76px;height:18px;background:#3d3d3d;border:1px solid #2a2a2a;border-top:none;border-radius:0 0 5px 5px"></div><div class="t" style="left:443px;top:929px;color:#eee;letter-spacing:0.2px">Where-used</div><div class="a" style="left:509px;top:926px;width:49px;height:18px;background:#3d3d3d;border:1px solid #2a2a2a;border-top:none;border-radius:0 0 5px 5px"></div><div class="t" style="left:518.5px;top:929px;color:#eee;letter-spacing:0.5px">Origin</div><div class="a" style="left:315px;top:915px;width:73px;height:41px;border:4px solid #50ec78;border-radius:12px"></div></body></html>
